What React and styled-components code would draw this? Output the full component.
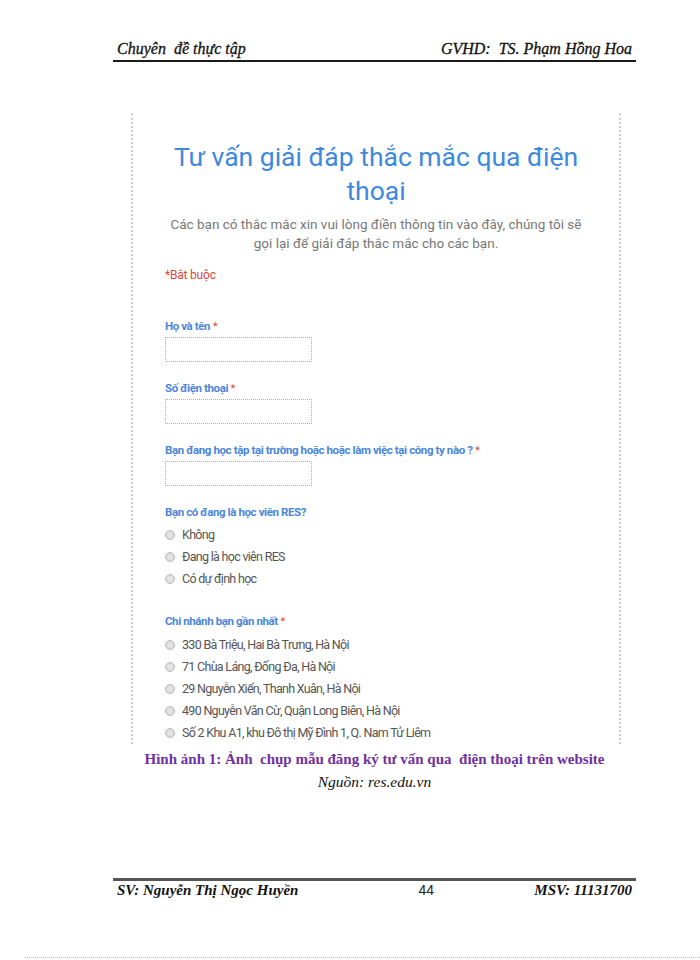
import styled, { createGlobalStyle } from 'styled-components';

const GlobalStyle = createGlobalStyle`
  html, body {
    margin: 0;
    padding: 0;
    background: #ffffff;
  }
  body {
    font-family: "Liberation Serif", serif;
  }
`;

const TEXT_FIELDS = [
  'Họ và tên',
  'Số điện thoại',
  'Bạn đang học tập tại trường hoặc hoặc làm việc tại công ty nào ?',
];

const STUDENT_OPTIONS = ['Không', 'Đang là học viên RES', 'Có dự định học'];

const BRANCHES = [
  '330 Bà Triệu, Hai Bà Trưng, Hà Nội',
  '71 Chùa Láng, Đống Đa, Hà Nội',
  '29 Nguyễn Xiển, Thanh Xuân, Hà Nội',
  '490 Nguyễn Văn Cừ, Quận Long Biên, Hà Nội',
  'Số 2 Khu A1, khu Đô thị Mỹ Đình 1, Q. Nam Tử Liêm',
];

export default function App() {
  return (
    <>
      <GlobalStyle />
      <Page>
        <RunningHead>
          <HeadText>Chuyên&nbsp; đề thực tập</HeadText>
          <HeadText>GVHD:&nbsp; TS. Phạm Hồng Hoa</HeadText>
        </RunningHead>

        <Shot>
          <Title>Tư vấn giải đáp thắc mắc qua điện thoại</Title>
          <Lead>
            Các bạn có thắc mắc xin vui lòng điền thông tin vào đây, chúng tôi sẽ
            gọi lại để giải đáp thắc mắc cho các bạn.
          </Lead>
          <Required>*Bắt buộc</Required>

          <Fields>
            {TEXT_FIELDS.map((label) => (
              <Field key={label}>
                <Label>
                  {label} <Star>*</Star>
                </Label>
                <TextBox />
              </Field>
            ))}

            <Field $gap={6}>
              <Label>Bạn có đang là học viên RES?</Label>
              <Options>
                {STUDENT_OPTIONS.map((o) => (
                  <Option key={o}>
                    <Radio />
                    {o}
                  </Option>
                ))}
              </Options>
            </Field>

            <Field $gap={7} $spaced>
              <Label>
                Chi nhánh bạn gần nhất <Star>*</Star>
              </Label>
              <Options>
                {BRANCHES.map((o) => (
                  <Option key={o}>
                    <Radio />
                    {o}
                  </Option>
                ))}
              </Options>
            </Field>
          </Fields>
        </Shot>

        <Caption>
          Hình ảnh 1: Ảnh&nbsp; chụp mẫu đăng ký tư vấn qua&nbsp; điện thoại trên website
        </Caption>
        <Source>Nguồn: res.edu.vn</Source>

        <Footer>
          <FootText>SV: Nguyễn Thị Ngọc Huyền</FootText>
          <PageNo>44</PageNo>
          <FootText>MSV: 11131700</FootText>
        </Footer>
      </Page>
      <PageEdge />
    </>
  );
}

const Page = styled.div`
  width: 523px;
  height: 957px;
  margin-left: 113px;
  display: flex;
  flex-direction: column;
`;

const RunningHead = styled.div`
  margin-top: 39px;
  padding: 0 4px 2px;
  display: flex;
  justify-content: space-between;
  align-items: flex-end;
  border-bottom: 2px solid #1a1a1a;
`;

const HeadText = styled.span`
  font-family: "Liberation Serif", serif;
  font-style: italic;
  font-size: 16px;
  line-height: 19px;
  color: #111;
  -webkit-text-stroke: 0.3px #111;
`;

const Shot = styled.div`
  margin: 51px 0 0 18px;
  width: 490px;
  height: 631px;
  box-sizing: border-box;
  border-left: 2px dotted #c9cfc9;
  border-right: 2px dotted #c9cfc9;
  padding: 27px 0 0 32px;
  display: flex;
  flex-direction: column;
  font-family: Roboto, "Noto Sans", sans-serif;
  overflow: hidden;
`;

const Title = styled.h1`
  margin: 0 0 0 -32px;
  padding: 0 30px;
  font-size: 26.5px;
  line-height: 34px;
  font-weight: 400;
  color: #3d89de;
  text-align: center;
`;

const Lead = styled.p`
  margin: 7px 0 0 -32px;
  padding: 0 30px;
  font-size: 13.5px;
  line-height: 19px;
  color: #777;
  text-align: center;
`;

const Required = styled.div`
  margin-top: 15px;
  font-size: 12px;
  color: #d9483b;
  letter-spacing: -0.2px;
`;

const Fields = styled.div`
  margin-top: 37px;
  display: flex;
  flex-direction: column;
  gap: 19px;
`;

const Field = styled.div`
  display: flex;
  flex-direction: column;
  gap: ${(p) => p.$gap ?? 3}px;
  margin-top: ${(p) => (p.$spaced ? 8 : 0)}px;
`;

const Label = styled.div`
  font-size: 11.5px;
  line-height: 15px;
  font-weight: 700;
  color: #4a86dc;
  letter-spacing: -0.4px;
`;

const Star = styled.span`
  color: #d9483b;
  font-weight: 400;
`;

const TextBox = styled.div`
  width: 145px;
  height: 23px;
  border: 1px dotted #aaa;
`;

const Options = styled.div`
  display: flex;
  flex-direction: column;
  gap: 5px;
`;

const Option = styled.div`
  display: flex;
  align-items: center;
  gap: 6px;
  height: 17px;
  font-size: 12.5px;
  color: #555;
  letter-spacing: -0.7px;
`;

const Radio = styled.span`
  width: 8px;
  height: 8px;
  border-radius: 50%;
  border: 1px solid #bbb;
  background: radial-gradient(circle, #e3e3e3 40%, #cfcfcf 100%);
  flex: none;
  margin-right: 1px;
`;

const Caption = styled.div`
  margin-top: 7px;
  text-align: center;
  font-family: "Liberation Serif", serif;
  font-weight: 700;
  font-size: 15px;
  line-height: 17px;
  color: #7030a0;
`;

const Source = styled.div`
  margin-top: 5px;
  text-align: center;
  font-family: "Liberation Serif", serif;
  font-style: italic;
  font-size: 15.5px;
  line-height: 18px;
  color: #111;
`;

const Footer = styled.div`
  margin-top: auto;
  margin-bottom: 58px;
  padding: 0 4px;
  border-top: 3px solid #555;
  display: flex;
  justify-content: space-between;
  align-items: baseline;
`;

const FootText = styled.span`
  font-family: "Liberation Serif", serif;
  font-style: italic;
  font-weight: 700;
  font-size: 15px;
  line-height: 18px;
  color: #111;
`;

const PageNo = styled.span`
  font-family: "Liberation Sans", Arial, sans-serif;
  font-size: 14px;
  color: #222;
  margin-left: 20px;
`;

const PageEdge = styled.div`
  margin-left: 25px;
  border-top: 1px dotted #bbb;
`;
